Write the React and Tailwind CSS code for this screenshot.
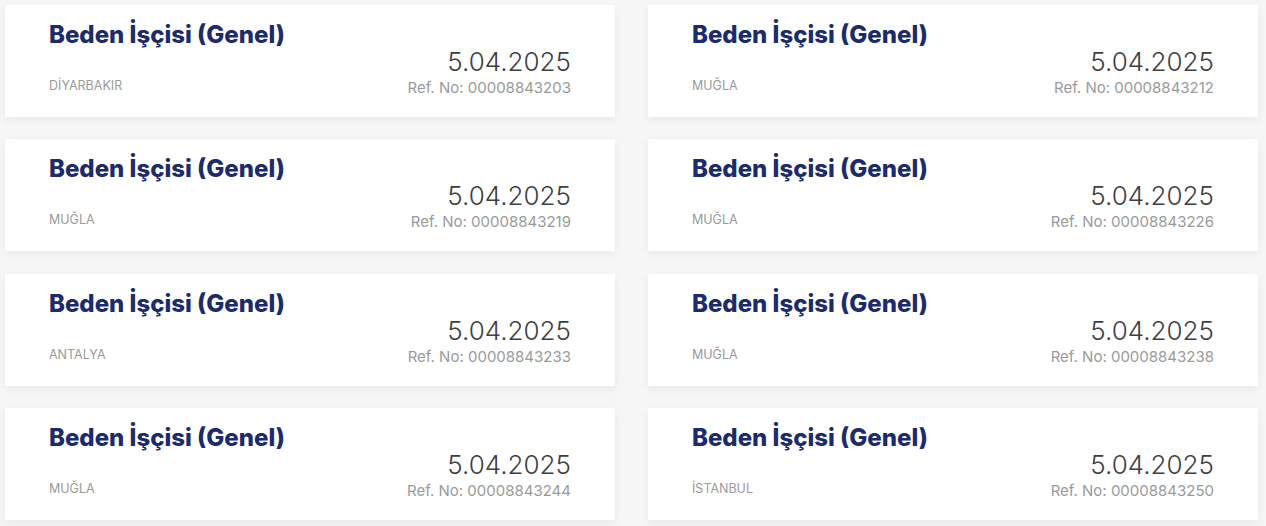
const JOBS = [
  { city: 'DİYARBAKIR', ref: '00008843203' },
  { city: 'MUĞLA', ref: '00008843212' },
  { city: 'MUĞLA', ref: '00008843219' },
  { city: 'MUĞLA', ref: '00008843226' },
  { city: 'ANTALYA', ref: '00008843233' },
  { city: 'MUĞLA', ref: '00008843238' },
  { city: 'MUĞLA', ref: '00008843244' },
  { city: 'İSTANBUL', ref: '00008843250' },
];

function JobCard({ job }) {
  return (
    <div className="bg-white h-[112px] px-[44px] pt-[16px] shadow-[0_3px_8px_rgba(0,0,0,0.06)]">
      <h3 className="text-[24px] leading-[28px] font-extrabold text-[#1b2b6b] tracking-[0px]">Beden İşçisi (Genel)</h3>
      <div className="flex items-end justify-between -mt-[2px]">
        <p className="text-[12.5px] leading-[16px] text-[#9a9a9a] uppercase mb-[4px]">{job.city}</p>
        <div className="text-right">
          <p className="text-[26px] leading-[30px] font-light text-[#3f3f3f]">5.04.2025</p>
          <p className="text-[15px] leading-[20px] mt-[1px] text-[#9a9a9a]">Ref. No: {job.ref}</p>
        </div>
      </div>
    </div>
  );
}

export default function App() {
  return (
    <div className="min-h-[526px] bg-[#f6f6f6] px-[5px] pt-[5px] pr-[8px]" style={{ fontFamily: 'Inter, "Noto Sans", sans-serif' }}>
      <div className="grid grid-cols-2 gap-x-[33px] gap-y-[22.33px]">
        {JOBS.map(j => <JobCard key={j.ref} job={j} />)}
      </div>
    </div>
  );
}
